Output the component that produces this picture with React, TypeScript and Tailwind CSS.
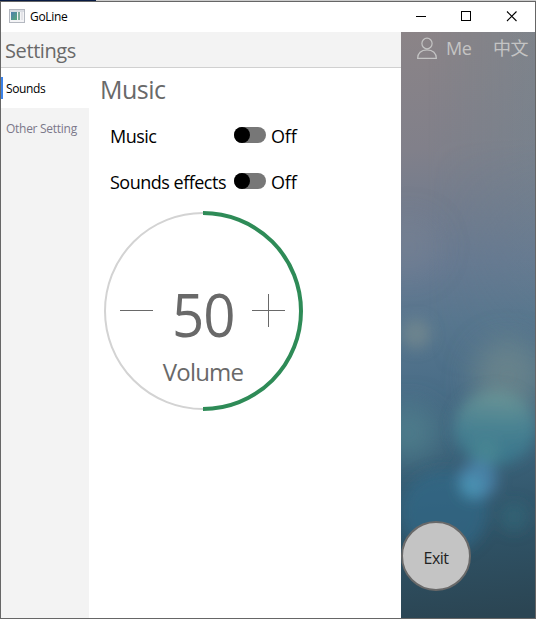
import React from "react";

function AppIcon() {
  return (
    <svg width="16" height="14" viewBox="0 0 16 14" className="ml-2 mt-[7px] block shrink-0" shapeRendering="crispEdges">
      <defs>
        <linearGradient id="pane" x1="0" y1="0" x2="1" y2="1">
          <stop offset="0" stopColor="#4f7fb0" />
          <stop offset="1" stopColor="#58a878" />
        </linearGradient>
      </defs>
      <rect width="16" height="14" fill="#b4b8c0" />
      <rect x="1" y="1" width="14" height="2" fill="#d9dce2" />
      <rect x="1" y="3" width="14" height="10" fill="#f4f4f6" />
      <rect x="2" y="3" width="6" height="8" fill="url(#pane)" />
      <rect x="9" y="3" width="2" height="8" fill="#7fae9e" />
      <rect x="12" y="3" width="2" height="8" fill="#e4e4e8" />
    </svg>
  );
}

function TitleBar() {
  return (
    <header className="flex h-[30px] shrink-0 bg-white">
      <AppIcon />
      <span className="ml-[5px] mt-[7px] grow text-[12px] leading-4 tracking-[-0.3px] text-black">GoLine</span>
      <svg width="138" height="30" viewBox="0 0 138 30" fill="none" stroke="#000" className="block">
        <path d="M19 14.5h10M64.5 9.5h9v9h-9z" shapeRendering="crispEdges" />
        <path d="M110 9.5l9.5 9.5M119.5 9.5l-9.5 9.5" strokeWidth="1.1" />
      </svg>
    </header>
  );
}

function ToggleRow({ label }: { label: string }) {
  return (
    <div className="flex h-[46px] text-[18px] leading-6 text-black">
      <span className="-mt-px w-[124px] whitespace-nowrap tracking-[-0.5px]">{label}</span>
      <span className="mt-[2px] flex h-4 w-8 rounded-full bg-[#777]">
        <span className="size-4 rounded-full bg-black" />
      </span>
      <span className="-mt-px ml-[5px] tracking-[-0.2px]">Off</span>
    </div>
  );
}

function VolumeDial() {
  return (
    <div className="relative ml-[14px] size-[200px]">
      <svg width="200" height="200" viewBox="0 0 200 200" fill="none" className="block">
        <circle cx="100" cy="100" r="98" stroke="#d3d3d3" strokeWidth="2" />
        <path d="M100 2a98 98 0 0 1 0 196" stroke="#2e8b57" strokeWidth="4" />
        <path d="M17 99.5h33M149 99.5h33M165.5 83v33" stroke="#696969" strokeWidth="1" shapeRendering="crispEdges" />
      </svg>
      <div className="absolute inset-x-0 top-[70px] flex flex-col items-center text-[#696969]">
        <span className="scale-x-[0.94] text-[60px] leading-[66px] tracking-[-1px]">50</span>
        <span className="mt-[3px] text-[24px] leading-[44px] tracking-[-0.8px]">Volume</span>
      </div>
    </div>
  );
}

function SettingsPanel() {
  return (
    <section className="flex w-[400px] shrink-0 flex-col bg-white">
      <div className="h-9 shrink-0 border-b border-[#d0d0d0] bg-[#f3f3f3] pl-1 pt-[5px] text-[20px] leading-7 tracking-[-0.4px] text-[#696969]">
        Settings
      </div>
      <div className="flex grow">
        <nav className="w-[88px] shrink-0 bg-[#f3f3f3] text-[12px]">
          <div className="flex h-10 items-center bg-white text-black">
            <span className="h-[22px] w-[2px] bg-[#3b82e8]" />
            <span className="ml-[3px] mt-[2px] tracking-[-0.35px]">Sounds</span>
          </div>
          <div className="flex h-10 items-center whitespace-nowrap pl-[5px] pt-[2px] tracking-[-0.28px] text-[#7b788a]">
            Other Setting
          </div>
        </nav>
        <main className="flex grow flex-col">
          <h1 className="ml-[11px] mt-[3px] h-[54px] text-[25px] leading-9 tracking-[-0.5px] text-[#696969]">Music</h1>
          <div className="ml-[21px]">
            <ToggleRow label="Music" />
            <ToggleRow label="Sounds effects" />
          </div>
          <div className="-mt-[6px]">
            <VolumeDial />
          </div>
        </main>
      </div>
    </section>
  );
}

function Backdrop() {
  return (
    <svg className="absolute inset-0" width="134" height="586" viewBox="0 0 134 586" preserveAspectRatio="none">
      <defs>
        <linearGradient id="sky" gradientUnits="userSpaceOnUse" x1="0" y1="0" x2="60" y2="586">
          <stop offset="0" stopColor="#8b8487" />
          <stop offset=".2" stopColor="#81808a" />
          <stop offset=".3" stopColor="#737c8d" />
          <stop offset=".4" stopColor="#667991" />
          <stop offset=".5" stopColor="#57768e" />
          <stop offset=".6" stopColor="#4b6e88" />
          <stop offset=".7" stopColor="#3f657d" />
          <stop offset=".81" stopColor="#33586d" />
          <stop offset=".9" stopColor="#2e4f61" />
          <stop offset="1" stopColor="#2b4553" />
        </linearGradient>
        <linearGradient id="side" x1="0" y1="0" x2="1" y2="0">
          <stop offset=".2" stopColor="#6d8591" stopOpacity="0" />
          <stop offset="1" stopColor="#6d8591" stopOpacity=".38" />
        </linearGradient>
        <linearGradient id="bubble" x1="0" y1="0" x2="0" y2="1">
          <stop offset="0" stopColor="#709b99" />
          <stop offset=".5" stopColor="#4b8b98" />
          <stop offset="1" stopColor="#367a91" />
        </linearGradient>
        <linearGradient id="fade" x1="0" y1="0" x2="0" y2="1">
          <stop offset=".3" stopColor="#fff" />
          <stop offset="1" stopColor="#000" />
        </linearGradient>
        <mask id="upper"><rect width="134" height="350" fill="url(#fade)" /></mask>
        <filter id="soft" x="-60%" y="-60%" width="220%" height="220%"><feGaussianBlur stdDeviation="7" /></filter>
        <filter id="wide" x="-60%" y="-60%" width="220%" height="220%"><feGaussianBlur stdDeviation="14" /></filter>
      </defs>
      <rect width="134" height="586" fill="url(#sky)" />
      <rect width="134" height="350" fill="url(#side)" mask="url(#upper)" />
      <g filter="url(#wide)">
        <circle cx="8" cy="215" r="32" fill="#828898" opacity=".3" />
        <ellipse cx="107" cy="345" rx="36" ry="38" fill="#788f8e" opacity=".6" />
        <circle cx="8" cy="401" r="28" fill="#568892" opacity=".6" />
      </g>
      <g filter="url(#soft)">
        <circle cx="15" cy="302" r="15" fill="#7d8d8f" opacity=".6" />
        <ellipse cx="94" cy="396" rx="41" ry="38" fill="url(#bubble)" opacity=".75" />
        <ellipse cx="43" cy="480" rx="44" ry="42" fill="#306a8b" opacity=".65" />
        <circle cx="85" cy="421" r="14" fill="#4c8c95" opacity=".6" />
        <circle cx="77" cy="448" r="19" fill="#4e8cb8" opacity=".7" />
        <circle cx="71" cy="454" r="12" fill="#4c98b5" opacity=".75" />
        <circle cx="113" cy="485" r="15" fill="#326b7d" opacity=".5" />
      </g>
    </svg>
  );
}

function SidePane() {
  return (
    <aside className="relative flex w-[134px] shrink-0 flex-col overflow-hidden">
      <Backdrop />
      <div className="relative flex h-9 text-[18px] leading-6 text-[#c4c4c4]">
        <svg width="22" height="24" viewBox="0 0 22 24" fill="none" stroke="#c4c4c4" strokeWidth="1.2" className="ml-[15px] mt-[5px] block">
          <ellipse cx="11" cy="6.5" rx="5.1" ry="5.3" />
          <path d="M1.6 21.4C1.6 16.5 5 12.8 11 12.8s9.4 3.7 9.4 8.6z" strokeLinejoin="round" />
        </svg>
        <span className="ml-[8px] mt-1 w-[47px] tracking-[-0.5px]">Me</span>
        <span className="mt-[3px] whitespace-nowrap font-['Noto_Sans_CJK_SC',sans-serif] tracking-[-0.5px]">中文</span>
      </div>
      <button className="relative mt-[453px] flex size-[70px] items-center justify-center rounded-full border-2 border-[#696969] bg-[#c4c4c4] pt-[3px] text-[16px] leading-5 tracking-[-0.5px] text-[#222]">
        Exit
      </button>
    </aside>
  );
}

export default function App() {
  return (
    <div className="flex h-[619px] w-[536px] flex-col overflow-hidden bg-white font-['Open_Sans','Noto_Sans',sans-serif]">
      <div className="flex h-px shrink-0 bg-[#ccc]">
        <span className="w-24 bg-[#071a43]" />
      </div>
      <div className="flex h-[618px] flex-col border border-[#666]">
        <TitleBar />
        <div className="flex grow">
          <SettingsPanel />
          <SidePane />
        </div>
      </div>
    </div>
  );
}
